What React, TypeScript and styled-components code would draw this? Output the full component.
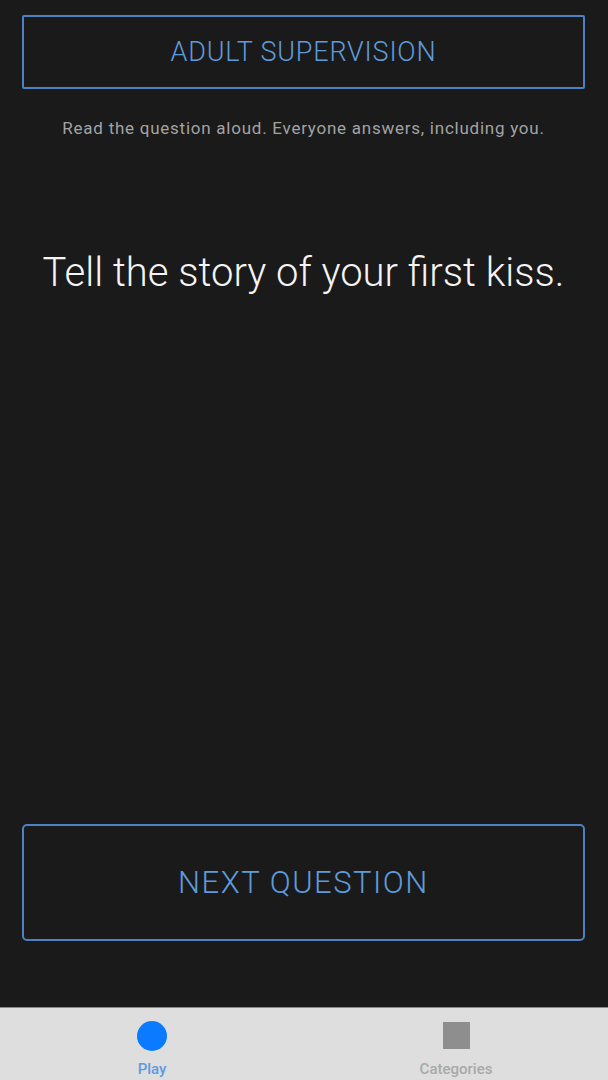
import React from "react";
import styled, { createGlobalStyle } from "styled-components";

const COLORS = {
  BG: "#1a1a1a",
  BLUE: "#5e9bdc",
  BORDER: "#4d82c2",
  GREY: "#a3a3a3",
  TAB_BG: "#dedede",
  TAB_ACTIVE: "#0a7aff",
};

const GlobalStyle = createGlobalStyle`
  html, body {
    margin: 0;
    padding: 0;
    background-color: ${COLORS.BG};
    font-family: "Roboto", "Liberation Sans", sans-serif;
  }
`;

const StyledScreen = styled.div`
  display: flex;
  flex-direction: column;
  width: 100%;
  height: 1080px;
  background-color: ${COLORS.BG};
`;

const StyledContent = styled.main`
  flex: 1;
  display: flex;
  flex-direction: column;
  padding: 15px 23px 66px 22px;
  box-sizing: border-box;
`;

const StyledOutlineButton = styled.button<{ $tall?: boolean }>`
  display: flex;
  align-items: center;
  justify-content: center;
  width: 100%;
  height: ${(p) => (p.$tall ? "117px" : "74px")};
  background: transparent;
  border: 2px solid ${COLORS.BORDER};
  border-radius: ${(p) => (p.$tall ? "5px" : "2px")};
  color: ${COLORS.BLUE};
  font-family: "Roboto", "Liberation Sans", sans-serif;
  font-weight: 300;
  font-size: ${(p) => (p.$tall ? "31px" : "27px")};
  letter-spacing: ${(p) => (p.$tall ? "1.5px" : "0.8px")};
  padding: 0;
  cursor: pointer;
`;

const StyledHint = styled.p`
  margin: 29px 0 0;
  text-align: center;
  color: ${COLORS.GREY};
  font-size: 17px;
  letter-spacing: 0.75px;
  line-height: 20px;
  white-space: nowrap;
`;

const StyledQuestion = styled.h1`
  margin: 110px 0 0;
  text-align: center;
  color: #f4f4f4;
  font-weight: 300;
  font-size: 40px;
  line-height: 50px;
`;

const StyledSpacer = styled.div`
  flex: 1;
`;

const StyledTabBar = styled.nav`
  display: grid;
  grid-template-columns: 1fr 1fr;
  height: 73px;
  background-color: ${COLORS.TAB_BG};
  border-top: 1px solid #8a8a8a;
  box-sizing: border-box;
`;

const StyledTab = styled.div<{ $active?: boolean }>`
  display: flex;
  flex-direction: column;
  align-items: center;
  padding-top: 13px;
  color: ${(p) => (p.$active ? "#5a9ae6" : "#a9a9a9")};
  font-size: 15px;
  font-weight: 500;
  line-height: 18px;

  span {
    margin-top: 9px;
  }
`;

const StyledDot = styled.div`
  width: 30px;
  height: 30px;
  border-radius: 50%;
  background-color: ${COLORS.TAB_ACTIVE};
`;

const StyledSquare = styled.div`
  width: 27px;
  height: 27px;
  margin: 1px 0 2px;
  background-color: #8e8e8e;
`;

const App = () => {
  return (
    <>
      <GlobalStyle />
      <StyledScreen>
        <StyledContent>
          <StyledOutlineButton>ADULT SUPERVISION</StyledOutlineButton>
          <StyledHint>
            Read the question aloud. Everyone answers, including you.
          </StyledHint>
          <StyledQuestion>Tell the story of your first kiss.</StyledQuestion>
          <StyledSpacer />
          <StyledOutlineButton $tall>NEXT QUESTION</StyledOutlineButton>
        </StyledContent>
        <StyledTabBar>
          <StyledTab $active>
            <StyledDot />
            <span>Play</span>
          </StyledTab>
          <StyledTab>
            <StyledSquare />
            <span>Categories</span>
          </StyledTab>
        </StyledTabBar>
      </StyledScreen>
    </>
  );
};

export default App;
